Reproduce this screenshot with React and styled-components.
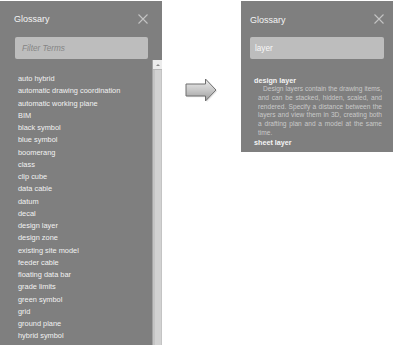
import React from 'react';
import styled, { createGlobalStyle } from 'styled-components';

const GlobalStyle = createGlobalStyle`
  html, body {
    margin: 0;
    padding: 0;
    background: #ffffff;
    font-family: 'Liberation Sans', Arial, sans-serif;
  }
`;

const Page = styled.div`
  display: flex;
  align-items: flex-start;
  width: 394px;
  height: 345px;
  padding-top: 1px;
  box-sizing: border-box;
  overflow: hidden;
`;

const Panel = styled.div`
  display: flex;
  flex-direction: column;
  flex-shrink: 0;
  width: ${(p) => p.$width}px;
  height: ${(p) => p.$height}px;
  background: #7f7f7f;
  box-sizing: border-box;
`;

const Header = styled.div`
  display: flex;
  align-items: center;
  justify-content: space-between;
  height: 36px;
  padding: ${(p) => p.$pad};
  box-sizing: border-box;
`;

const Title = styled.div`
  font-size: 9px;
  color: #f4f4f4;
  margin-top: ${(p) => p.$drop || 0}px;
`;

const CloseIcon = styled.svg`
  width: 10px;
  height: 10px;
  display: block;
`;

const FilterBox = styled.div`
  display: flex;
  align-items: center;
  width: ${(p) => p.$width}px;
  height: 22px;
  margin-left: ${(p) => p.$left}px;
  padding-left: ${(p) => p.$textLeft}px;
  box-sizing: border-box;
  background: #bdbdbd;
  border-radius: 2px;
  font-size: 8.2px;
  color: ${(p) => (p.$placeholder ? '#858585' : '#f8f8f8')};
  font-style: ${(p) => (p.$placeholder ? 'italic' : 'normal')};
`;

const ListArea = styled.div`
  display: flex;
  flex: 1;
  margin-top: 1px;
  min-height: 0;
`;

const TermList = styled.ul`
  flex: 1;
  list-style: none;
  margin: 0;
  padding: 13px 0 0 18px;
`;

const Term = styled.li`
  font-size: 7.4px;
  line-height: 12.25px;
  color: #f2f2f2;
  white-space: nowrap;
`;

const Scrollbar = styled.div`
  display: flex;
  flex-direction: column;
  width: 10px;
  border-left: 1px solid #a3a3a3;
  background: #c4c4c4;
  box-sizing: border-box;
`;

const ScrollButton = styled.div`
  display: flex;
  align-items: center;
  justify-content: center;
  height: 9px;
  background: #ececec;
  border-bottom: 1px solid #b8b8b8;
  &::after {
    content: '';
    border-left: 2px solid transparent;
    border-right: 2px solid transparent;
    border-bottom: 2px solid #8a8a8a;
  }
`;

const Thumb = styled.div`
  flex: 1;
  margin: 0 1px 0 2px;
  background: #d2d2d2;
`;

const ArrowCol = styled.div`
  display: flex;
  justify-content: center;
  flex-shrink: 0;
  width: 79px;
  padding-top: 77px;
`;

const Results = styled.div`
  padding: 17px 10px 0 13px;
`;

const ResultTerm = styled.div`
  font-size: 7.2px;
  font-weight: 700;
  line-height: 9px;
  color: #f4f4f4;
  white-space: nowrap;
`;

const Description = styled.div`
  width: 124px;
  margin: 0 0 0 4px;
  font-size: 6.6px;
  line-height: 8.8px;
  color: #c9c9c9;
`;

const DescLine = styled.span`
  display: block;
  white-space: nowrap;
  text-align: ${(p) => (p.$last ? 'left' : 'justify')};
  text-align-last: ${(p) => (p.$last ? 'left' : 'justify')};
  padding-left: ${(p) => (p.$indent ? 5 : 0)}px;
`;

const terms = [
  'auto hybrid',
  'automatic drawing coordination',
  'automatic working plane',
  'BIM',
  'black symbol',
  'blue symbol',
  'boomerang',
  'class',
  'clip cube',
  'data cable',
  'datum',
  'decal',
  'design layer',
  'design zone',
  'existing site model',
  'feeder cable',
  'floating data bar',
  'grade limits',
  'green symbol',
  'grid',
  'ground plane',
  'hybrid symbol',
];

const descLines = [
  'Design layers contain the drawing items,',
  'and can be stacked, hidden, scaled, and',
  'rendered. Specify a distance between the',
  'layers and view them in 3D, creating both',
  'a drafting plan and a model at the same',
  'time.',
];

function Close() {
  return (
    <CloseIcon viewBox="0 0 10 10">
      <path d="M0.5 0.5 L9.5 9.5 M9.5 0.5 L0.5 9.5" stroke="#c4c4c4" strokeWidth="1.1" fill="none" />
    </CloseIcon>
  );
}

function Arrow() {
  return (
    <svg width="33" height="25" viewBox="0 0 33 25">
      <defs>
        <linearGradient id="arrowFill" x1="0" y1="0" x2="0" y2="1">
          <stop offset="0" stopColor="#ececec" />
          <stop offset="0.5" stopColor="#c8c8c8" />
          <stop offset="1" stopColor="#9c9c9c" />
        </linearGradient>
      </defs>
      <polygon points="1.5,6.5 21,6.5 21,1.5 31.5,12.5 21,23.5 21,18.5 1.5,18.5" fill="#bdbdbd" opacity="0.35" transform="translate(0.8,0.8)" />
      <polygon points="1,6 20.5,6 20.5,1 31,12 20.5,23 20.5,18 1,18" fill="url(#arrowFill)" stroke="#6e6e6e" strokeWidth="1" />
    </svg>
  );
}

export default function App() {
  return (
    <>
      <GlobalStyle />
      <Page>
        <Panel $width={162} $height={344}>
          <Header $pad="0 14px 0 14px">
            <Title>Glossary</Title>
            <Close />
          </Header>
          <FilterBox $width={133} $left={15} $textLeft={7} $placeholder>
            Filter Terms
          </FilterBox>
          <ListArea>
            <TermList>
              {terms.map((t) => (
                <Term key={t}>{t}</Term>
              ))}
            </TermList>
            <Scrollbar>
              <ScrollButton />
              <Thumb />
            </Scrollbar>
          </ListArea>
        </Panel>

        <ArrowCol>
          <Arrow />
        </ArrowCol>

        <Panel $width={152} $height={151}>
          <Header $pad="0 9px 0 9px">
            <Title $drop={2}>Glossary</Title>
            <Close />
          </Header>
          <FilterBox $width={134} $left={9} $textLeft={5}>
            layer
          </FilterBox>
          <Results>
            <ResultTerm>design layer</ResultTerm>
            <Description>
              {descLines.map((line, i) => (
                <DescLine key={i} $indent={i === 0} $last={i === descLines.length - 1}>
                  {line}
                </DescLine>
              ))}
            </Description>
            <ResultTerm>sheet layer</ResultTerm>
          </Results>
        </Panel>
      </Page>
    </>
  );
}
